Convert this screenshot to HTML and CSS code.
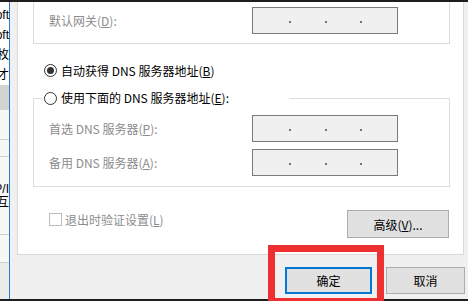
FILE: index.html
```html
<!DOCTYPE html>
<html lang="zh-CN">
<head>
<meta charset="utf-8">
<title>DNS 设置</title>
<link rel="stylesheet" href="styles.css">
</head>
<body>
<div class="topbar"></div>
<div class="main">
  <div class="bgwin">
    <div class="bgt first">Microsoft</div>
    <div class="bgt">Microsoft</div>
    <div class="bgt">安装枚</div>
    <div class="bgt">属性石才</div>
    <div class="bgsel"></div>
    <div class="bgcell h30"></div>
    <div class="bgcell h17"></div>
    <div class="bgcell h78"><span class="bgt2">TCP/I</span><span class="bgt2">相互</span></div>
    <div class="bgcell h28"></div>
    <div class="bgrest"></div>
  </div>
  <div class="dialog">
    <div class="tabpage">
      <div class="group1">
        <div class="row">
          <span class="lbl">默认网关(<u>D</u>):</span>
          <div class="ip"><i></i><i></i><i></i><i></i></div>
        </div>
      </div>
      <div class="radio radio1"><span class="circle on"></span>自动获得 DNS 服务器地址(<u>B</u>)</div>
      <fieldset class="group2">
        <legend><span class="radio"><span class="circle"></span>使用下面的 DNS 服务器地址(<u>E</u>):</span></legend>
        <div class="row">
          <span class="lbl">首选 DNS 服务器(<u>P</u>):</span>
          <div class="ip"><i></i><i></i><i></i><i></i></div>
        </div>
        <div class="row row2">
          <span class="lbl">备用 DNS 服务器(<u>A</u>):</span>
          <div class="ip"><i></i><i></i><i></i><i></i></div>
        </div>
      </fieldset>
      <div class="bottomrow">
        <div class="check"><span class="box"></span>退出时验证设置(<u>L</u>)</div>
        <button class="btn adv">高级(<u>V</u>)...</button>
      </div>
    </div>
    <div class="buttons">
      <button class="btn ok">确定</button>
      <button class="btn cancel">取消</button>
    </div>
  </div>
</div>
<div class="bottombar"></div>
<div class="redbox"></div>
</body>
</html>
```

FILE: styles.css
```css
* { box-sizing: border-box; }
html, body { margin: 0; padding: 0; }
body {
  width: 468px;
  height: 301px;
  overflow: hidden;
  position: relative;
  background: #f0f0f0;
  color: #000;
  font-family: "Noto Sans CJK SC", "Microsoft YaHei", sans-serif;
  font-size: 12px;
}
u { text-decoration: underline; text-underline-offset: 1px; }

.topbar, .bottombar { height: 2px; background: #1e1e1e; }
.main { display: flex; height: 297px; }

/* background window strip */
.bgwin {
  width: 9px;
  background: #fff;
  overflow: hidden;
  display: flex;
  flex-direction: column;
}
.bgt {
  height: 20px;
  line-height: 20px;
  white-space: nowrap;
  direction: rtl;
  text-align: right;
  font-family: "Liberation Sans", "Noto Sans CJK SC", sans-serif;
  font-size: 12px;
  flex: none;
}
.bgt.first { margin-top: 3px; }
.bgsel { height: 25px; background: #d3d3d3; flex: none; }
.bgcell { border-bottom: 1px solid #cfcfcf; background: #f7f7f7; flex: none; }
.h30 { height: 30px; }
.h17 { height: 17px; }
.h78 { height: 78px; display: flex; flex-direction: column; justify-content: center; }
.h28 { height: 28px; }
.bgt2 {
  display: block;
  white-space: nowrap;
  direction: rtl;
  text-align: right;
  line-height: 13px;
  font-family: "Liberation Sans", "Noto Sans CJK SC", sans-serif;
}
.bgrest { flex: 1; background: #ececec; }

/* dialog */
.dialog {
  flex: 1;
  border-left: 1px solid #2b79d0;
  background: #f0f0f0;
  display: flex;
  flex-direction: column;
}
.tabpage {
  margin: 0 4px 0 7px;
  height: 253px;
  background: #fff;
  border: 1px solid #d9d9d9;
  border-top: none;
  padding: 0 13px 0 15px;
}
.group1 {
  border: 1px solid #dcdcdc;
  border-top: none;
  padding: 5px 0 9px 15px;
}
.row { display: flex; align-items: center; height: 27px; }
.row2 { margin-top: 7px; }
.lbl { width: 203px; color: #8c8c8c; white-space: nowrap; }
.ip {
  width: 146px;
  height: 27px;
  border: 1px solid #7a7a7a;
  background: #f0f0f0;
  display: flex;
}
.ip i {
  display: flex;
  justify-content: flex-end;
  align-items: center;
  flex: none;
}
.ip i:nth-child(1) { width: 37px; }
.ip i:nth-child(2) { width: 36px; }
.ip i:nth-child(3) { width: 35px; }
.ip i:nth-child(4) { width: 36px; }
.ip i:not(:last-child)::after {
  content: "";
  width: 2px;
  height: 2px;
  margin-top: 2px;
  margin-right: -1px;
  background: #707070;
}

.radio { display: flex; align-items: center; white-space: nowrap; }
.radio1 { height: 20px; margin: 16px 0 0 11px; }
.circle {
  width: 13px;
  height: 13px;
  border: 1px solid #333;
  border-radius: 50%;
  margin-right: 4px;
  display: flex;
  align-items: center;
  justify-content: center;
  background: #fff;
  flex: none;
}
.circle.on::after {
  content: "";
  width: 7px;
  height: 7px;
  border-radius: 50%;
  background: #333;
}

.group2 {
  margin: 10px 0 0;
  padding: 9px 0 10px 15px;
  border: 1px solid #dcdcdc;
  min-width: 0;
}
.group2 legend {
  margin-left: -6px;
  padding: 0 0 0 1px;
  width: 246px;
  height: 16px;
  line-height: 16px;
}
.group2 legend .radio { height: 16px; }

.bottomrow {
  display: flex;
  justify-content: space-between;
  align-items: flex-start;
  margin-top: 23px;
  padding: 0 1px 0 16px;
}
.check {
  display: flex;
  align-items: center;
  height: 18px;
  color: #8c8c8c;
  white-space: nowrap;
}
.box {
  width: 13px;
  height: 13px;
  border: 1px solid #bcbcbc;
  background: #fff;
  margin-right: 3px;
}

.btn {
  background: #e1e1e1;
  border: 1px solid #adadad;
  font: inherit;
  color: #000;
  padding: 0;
  margin: 0;
  height: 27px;
}
.adv { width: 102px; height: 28px; }
.buttons {
  display: flex;
  gap: 14px;
  padding: 12px 0 0 275px;
}
.ok { width: 87px; border: 2px solid #0078d7; }
.cancel { width: 79px; }

.redbox {
  position: absolute;
  left: 268px;
  top: 245px;
  width: 116px;
  height: 60px;
  border: 7px solid #ee3030;
}
```
